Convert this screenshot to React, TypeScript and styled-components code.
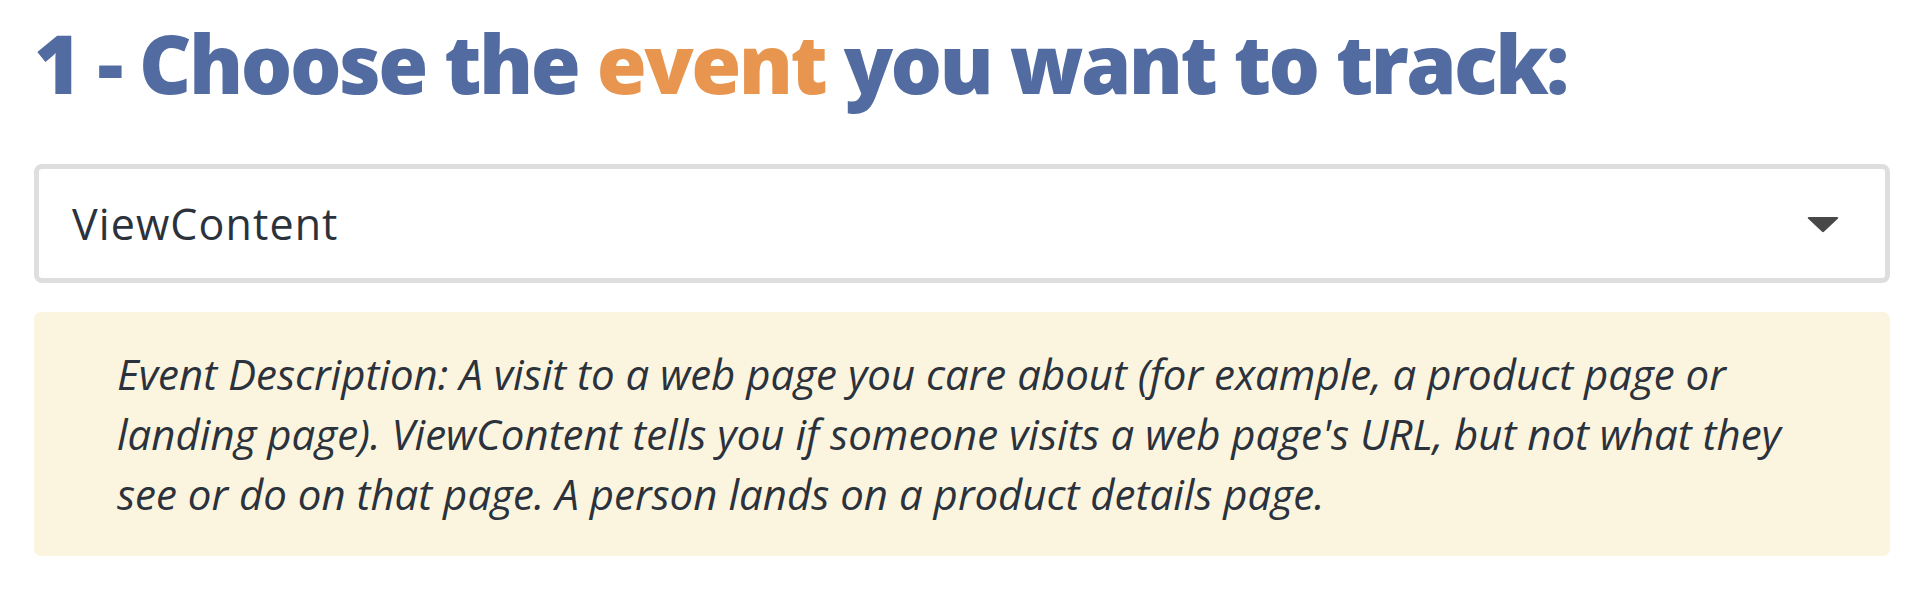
import React from "react";
import styled, { createGlobalStyle } from "styled-components";

const GlobalStyle = createGlobalStyle`
  html, body {
    margin: 0;
    padding: 0;
    background: #ffffff;
  }
  body {
    font-family: "Open Sans", "Liberation Sans", sans-serif;
  }
`;

const Page = styled.div`
  display: flex;
  flex-direction: column;
  padding: 15px 22px 0 34px;
`;

const Heading = styled.h1`
  margin: 0;
  font-family: "Open Sans", sans-serif;
  font-weight: 800;
  font-size: 81px;
  line-height: 96px;
  color: #526ba1;
  letter-spacing: -2.55px;
`;

const Accent = styled.span`
  color: #e8964f;
`;

const SelectBox = styled.div`
  margin-top: 53px;
  height: 119px;
  box-sizing: border-box;
  border: 5px solid #dedede;
  border-radius: 8px;
  background: #fff;
  display: flex;
  align-items: center;
  justify-content: space-between;
  padding: 0 46px 0 33px;
`;

const SelectValue = styled.span`
  font-family: "Open Sans", sans-serif;
  font-size: 43px;
  letter-spacing: 1.1px;
  color: #2b323c;
`;

const Caret = styled.svg`
  width: 32px;
  height: 16px;
  display: block;
  margin-top: 2px;
`;

const Description = styled.div`
  margin-top: 29px;
  background: #fbf5df;
  border-radius: 7px;
  padding: 32px 83px 32px 83px;
`;

const DescText = styled.p`
  margin: 0;
  font-family: "Open Sans", sans-serif;
  font-style: italic;
  font-size: 42px;
  line-height: 60px;
  color: #2b323c;
`;

export default function App() {
  return (
    <>
      <GlobalStyle />
      <Page>
        <Heading>
          1 - Choose the <Accent>event</Accent> you want to track:
        </Heading>
        <SelectBox>
          <SelectValue>ViewContent</SelectValue>
          <Caret viewBox="0 0 32 16">
            <path d="M1 1.5 Q0 0 2 0 H30 Q32 0 31 1.5 L17.2 14.6 Q16 15.8 14.8 14.6 Z" fill="#484848" />
          </Caret>
        </SelectBox>
        <Description>
          <DescText>
            Event Description: A visit to a web page you care about (for example, a product page or landing page). ViewContent tells you if someone visits a web page's URL, but not what they see or do on that page. A person lands on a product details page.
          </DescText>
        </Description>
      </Page>
    </>
  );
}
